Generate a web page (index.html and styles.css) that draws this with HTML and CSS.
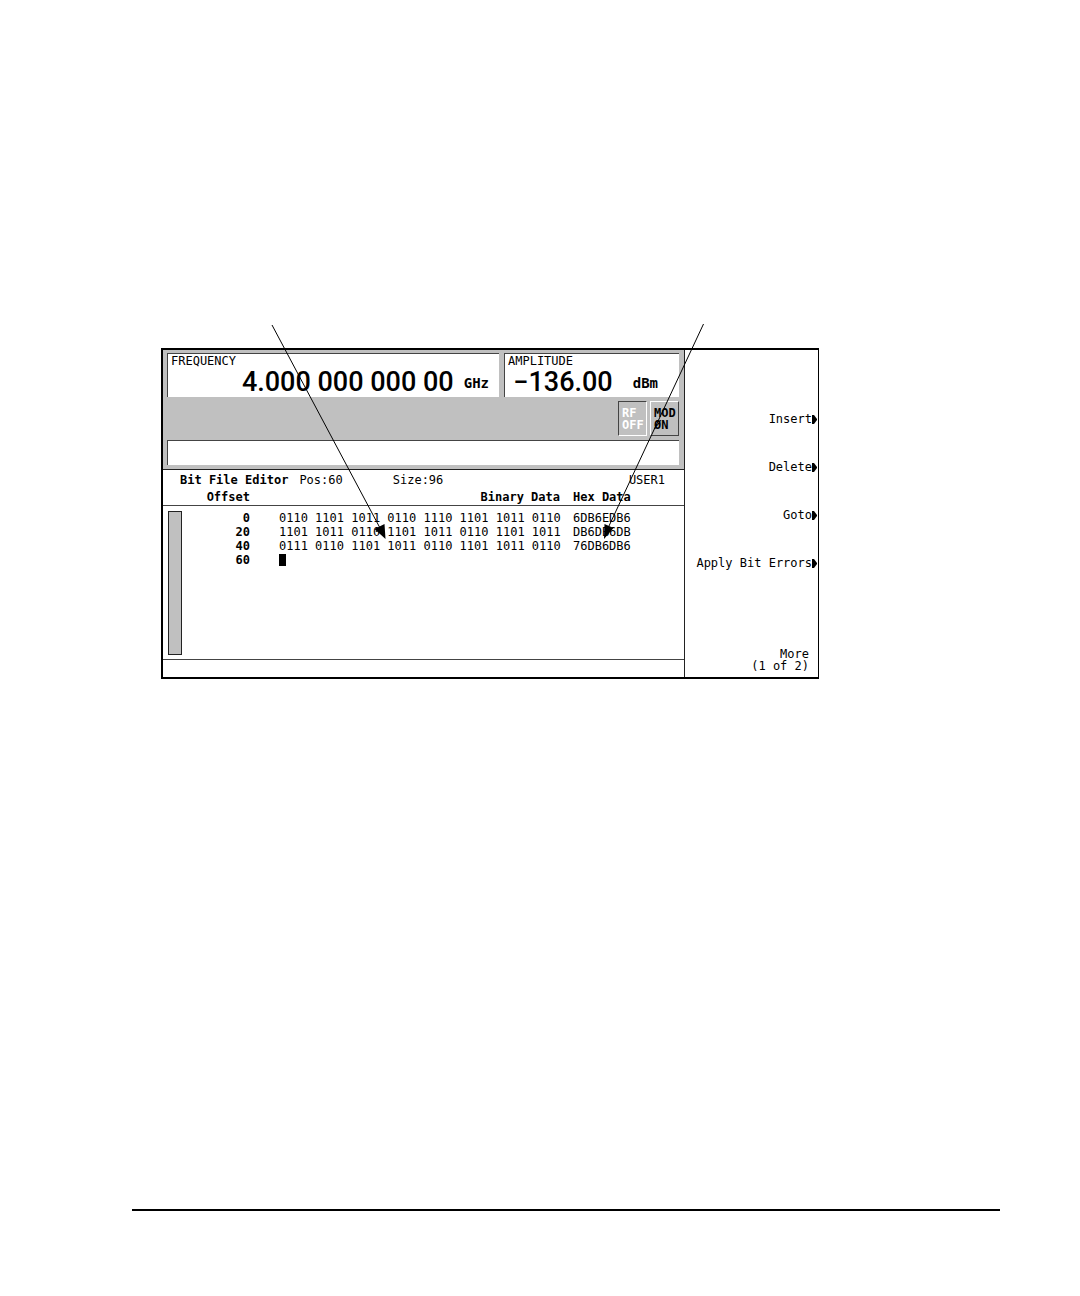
FILE: index.html
```html
<!DOCTYPE html>
<html lang="en">
<head>
<meta charset="utf-8">
<meta name="viewport" content="width=device-width, initial-scale=1">
<title>Bit File Editor</title>
<link rel="stylesheet" href="styles.css">
</head>
<body>
<main class="sheet">
  <figure class="figure">
    <div class="instrument">
      <section class="display">
        <header class="status">
          <div class="readouts">
            <div class="readout frequency">
              <span class="caption">FREQUENCY</span>
              <span class="value">4.000 000 000 00</span>
              <span class="unit">GHz</span>
            </div>
            <div class="readout amplitude">
              <span class="caption">AMPLITUDE</span>
              <span class="value">−136.00</span>
              <span class="unit">dBm</span>
            </div>
          </div>
          <div class="badges">
            <span class="badge off">RF<br>OFF</span>
            <span class="badge on">MOD<br>ØN</span>
          </div>
          <div class="message"></div>
        </header>
        <div class="title-row">
          <b class="title">Bit File Editor</b>
          <span class="position">Pos:60</span>
          <span>Size:96</span>
          <span class="file">USER1</span>
        </div>
        <div class="editor">
          <table class="bits">
            <thead>
              <tr><th class="offset">Offset</th><th class="binary">Binary Data</th><th class="hex">Hex Data</th></tr>
            </thead>
            <tbody>
              <tr><th class="offset">0</th><td class="binary">0110 1101 1011 0110 1110 1101 1011 0110</td><td class="hex">6DB6EDB6</td></tr>
              <tr><th class="offset">20</th><td class="binary">1101 1011 0110 1101 1011 0110 1101 1011</td><td class="hex">DB6DB6DB</td></tr>
              <tr><th class="offset">40</th><td class="binary">0111 0110 1101 1011 0110 1101 1011 0110</td><td class="hex">76DB6DB6</td></tr>
              <tr><th class="offset">60</th><td class="binary"><span class="cursor"></span></td><td class="hex"></td></tr>
            </tbody>
          </table>
          <div class="scrollbar"></div>
        </div>
        <div class="footer-line"></div>
      </section>
      <nav class="softkeys">
        <button class="softkey" type="button">Insert<svg class="arrow" viewBox="0 0 5 9"><path d="M0 0h2l3 4v1L2 9H0z"/></svg></button>
        <button class="softkey" type="button">Delete<svg class="arrow" viewBox="0 0 5 9"><path d="M0 0h2l3 4v1L2 9H0z"/></svg></button>
        <button class="softkey" type="button">Goto<svg class="arrow" viewBox="0 0 5 9"><path d="M0 0h2l3 4v1L2 9H0z"/></svg></button>
        <button class="softkey" type="button">Apply Bit Errors<svg class="arrow" viewBox="0 0 5 9"><path d="M0 0h2l3 4v1L2 9H0z"/></svg></button>
        <button class="softkey more" type="button">More<br>(1 of 2)</button>
      </nav>
    </div>
    <svg class="callouts" viewBox="0 0 658 216" preserveAspectRatio="none">
      <path class="leader" d="M111 1 219 204M542.500 0 447.500 203"/>
      <path d="M224.500 215 213.500 205 223.500 200zM443 215 443.500 200 452.500 204z"/>
    </svg>
  </figure>
  <hr class="rule">
</main>
</body>
</html>
```
FILE: styles.css
```css
* {
  box-sizing: border-box;
}

body {
  margin: 0;
  background: #fff;
  color: #000;
  font: 12px/14px "DejaVu Sans Mono", "Liberation Mono", monospace;
}

.sheet {
  display: flex;
  flex-direction: column;
  min-height: 100vh;
  padding: 348px 80px 85px 132px;
}

.figure {
  position: relative;
  margin: 0 181px 0 29px;
}

.instrument {
  display: grid;
  grid-template-columns: minmax(0, 1fr) 133px;
  border: 2px solid #000;
  border-right-width: 1px;
}

.display {
  display: flex;
  flex-direction: column;
  border-right: 1px solid #222;
}

/* Grey status area */
.status {
  display: flex;
  flex-direction: column;
  gap: 4px;
  padding: 3px 5px 4px 4px;
  background: #c0c0c0;
  border-bottom: 1px solid #222;
}

.readouts {
  display: grid;
  grid-template-columns: 332px 1fr;
  gap: 5px;
}

.readout {
  display: grid;
  grid-template-columns: 1fr auto;
  grid-template-rows: 14px 28px;
  height: 44px;
  background: #fff;
  border: solid #444;
  border-width: 1px 0 0 1px;
}

.caption {
  grid-column: 1 / -1;
  padding-left: 3px;
}

.value {
  justify-self: end;
  font: 500 27px/28px Roboto, "Liberation Sans", sans-serif;
  white-space: nowrap;
}

.unit {
  padding-left: 10px;
  font: bold 14px/30px "DejaVu Sans Mono", "Liberation Mono", monospace;
}

.frequency .unit {
  padding-right: 10px;
}

.amplitude .unit {
  padding-right: 21px;
  padding-left: 20px;
}

.badges {
  display: flex;
  justify-content: flex-end;
  gap: 3px;
}

.badge {
  width: 29px;
  height: 35px;
  padding: 5px 0 0 3px;
  border: 1px solid;
  font-weight: bold;
  line-height: 12px;
}

.off {
  color: #fff;
  border-color: #444 #fff #fff #444;
}

.on {
  border-color: #fff #444 #444 #fff;
}

.message {
  height: 25px;
  background: #fff;
  border: solid #444;
  border-width: 1px 0 0 1px;
}

/* File summary */
.title-row {
  display: flex;
  padding: 3px 19px 2px 17px;
}

.title {
  padding-right: 11px;
}

.position {
  padding-right: 50px;
}

.file {
  margin-left: auto;
}

/* Bit table with its scroll bar in the left gutter */
.editor {
  display: grid;
  grid-template-rows: 17px 153px;
}

.bits {
  grid-area: 1 / 1 / 3 / 2;
  align-self: start;
  width: 100%;
  table-layout: fixed;
  border-collapse: separate;
  border-spacing: 0;
}

.bits th,
.bits td {
  height: 14px;
  padding: 0;
  white-space: nowrap;
}

.bits thead th {
  height: 17px;
  border-bottom: 1px solid #444;
}

.bits tbody tr:first-child > * {
  padding-top: 5px;
}

.bits .offset {
  width: 87px;
  text-align: right;
}

.bits .binary {
  width: 310px;
  padding-left: 29px;
}

.bits thead .binary {
  padding-left: 0;
  text-align: right;
}

.bits .hex {
  padding-left: 13px;
  text-align: left;
}

.cursor {
  display: block;
  width: 7px;
  height: 12px;
  background: #000;
}

.scrollbar {
  grid-area: 2 / 1 / 3 / 2;
  width: 14px;
  margin: 5px 0 4px 5px;
  background: #c0c0c0;
  border: 1px solid #222;
}

.footer-line {
  height: 18px;
  border-top: 1px solid #444;
}

/* Softkey labels */
.softkeys {
  display: flex;
  flex-direction: column;
  padding: 45px 1px 5px 0;
}

.softkey {
  display: flex;
  align-items: center;
  justify-content: flex-end;
  height: 48px;
  padding: 0;
  background: none;
  border: 0;
  color: inherit;
  font: inherit;
}

.arrow {
  width: 5px;
  height: 9px;
}

.more {
  display: block;
  height: 24px;
  margin-top: auto;
  padding-right: 8px;
  line-height: 12px;
  text-align: right;
}

.callouts {
  position: absolute;
  top: -24px;
  left: 0;
  width: 100%;
  height: 216px;
}

.leader {
  fill: none;
  stroke: #000;
}

.rule {
  width: 100%;
  height: 2px;
  margin: auto 0 0;
  background: #000;
  border: 0;
}
```
